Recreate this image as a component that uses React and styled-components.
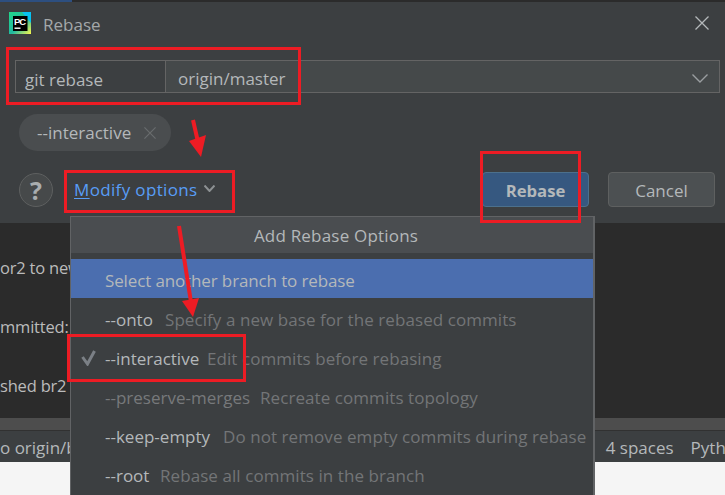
import React from "react";
import styled, { createGlobalStyle } from "styled-components";

const Global = createGlobalStyle`
  html, body { margin: 0; padding: 0; background: #f5f5f5; }
  body { font-family: "Open Sans", "Noto Sans", sans-serif; font-size: 17px; }
`;

const Page = styled.div`
  position: relative;
  width: 725px;
  height: 495px;
  overflow: hidden;
  display: flex;
  flex-direction: column;
  background: #f5f5f5;
`;

const TopStrip = styled.div`
  height: 2px;
  background: #2b2b2b;
  display: flex;
  div { width: 72px; background: #2d4f80; }
`;

const Dialog = styled.section`
  height: 221px;
  box-sizing: border-box;
  padding: 0 5px 0 9px;
  background: #3c3f41;
  color: #b4b8ba;
  display: flex;
  flex-direction: column;
`;

const TitleBar = styled.header`
  height: 46px;
  display: flex;
  align-items: center;
  gap: 12px;
  color: #a4a8aa;
  span { margin-bottom: 2px; }
  svg { margin-bottom: 4px; }
  svg:last-child { margin-left: auto; margin-right: 11px; }
`;

const Field = styled.div`
  margin: 12px 0 0 6px;
  height: 33px;
  display: flex;
  box-sizing: border-box;
  border: 1px solid #646464;
  line-height: 37px;
`;

const Prefix = styled.div`
  width: 150px;
  box-sizing: border-box;
  padding-left: 9px;
  border-right: 1px solid #646464;
`;

const BranchInput = styled.div`
  flex: 1;
  background: #45494a;
  padding: 3px 0 0 12px;
  display: flex;
  align-items: center;
  justify-content: space-between;
  svg { margin-right: 11px; }
`;

const Chip = styled.div`
  margin: 21px 0 0 10px;
  width: 152px;
  height: 37px;
  box-sizing: border-box;
  padding: 0 15px 0 18px;
  border-radius: 19px;
  background: #4a4d4f;
  display: flex;
  align-items: center;
  justify-content: space-between;
`;

const Footer = styled.footer`
  margin: 21px 5px 0 10px;
  display: flex;
  align-items: center;
  height: 35px;
`;

const HelpButton = styled.div`
  width: 34px;
  height: 34px;
  box-sizing: border-box;
  border-radius: 50%;
  border: 1px solid #5e6060;
  background: #46494a;
  font-weight: 700;
  font-size: 25px;
  line-height: 32px;
  text-align: center;
  color: #a9adaf;
`;

const ModifyLink = styled.div`
  margin-left: 21px;
  display: flex;
  align-items: center;
  gap: 6px;
  color: #589df6;
  letter-spacing: 0.35px;
  u { text-underline-offset: 2px; }
  svg { margin-bottom: 3px; }
`;

const Button = styled.div`
  width: ${(p) => p.$width}px;
  height: 35px;
  box-sizing: border-box;
  margin-left: ${(p) => p.$left || 0};
  border-radius: 4px;
  border: 1px solid ${(p) => (p.$primary ? "#4c708c" : "#5e6060")};
  background: ${(p) => (p.$primary ? "#365880" : "#4c5052")};
  font-size: ${(p) => (p.$primary ? "16.7px" : "17px")};
  font-weight: ${(p) => (p.$primary ? 700 : 400)};
  line-height: 35px;
  text-align: center;
  color: #b4b8ba;
`;

const Editor = styled.div`
  flex: 1;
  background: #2b2b2b;
  color: #bbbbbb;
  font-size: 16.5px;
  letter-spacing: -0.2px;
  overflow: hidden;
  display: flex;
  flex-direction: column;
  padding-top: 34px;
  gap: 37px;
`;

const OutputLine = styled.div`
  height: 22px;
  line-height: 22px;
  white-space: nowrap;
`;

const ScrollTrack = styled.div`
  height: 13px;
  box-sizing: border-box;
  background: #4d4d4d;
  border-bottom: 1px solid #323232;
`;

const StatusBar = styled.div`
  height: 31px;
  background: #3c3f41;
  color: #b4b8ba;
  line-height: 33px;
  display: flex;
  white-space: nowrap;
  overflow: hidden;
  box-shadow: 0 2px 3px rgba(0, 0, 0, 0.25);
`;

const StatusItem = styled.span`
  margin-left: ${(p) => p.$left}px;
`;

const Blank = styled.div`
  height: 33px;
  background: #f5f5f5;
`;

const Popup = styled.div`
  position: absolute;
  left: 70px;
  top: 216px;
  width: 525px;
  height: 285px;
  box-sizing: border-box;
  border: 1px solid #616365;
  border-right-width: 2px;
  background: #3c3f41;
`;

const PopupTitle = styled.div`
  height: 36px;
  box-sizing: border-box;
  padding-left: 8px;
  background: #4a4d50;
  color: #b4b8ba;
  line-height: 38px;
  text-align: center;
  letter-spacing: 0.2px;
  margin-bottom: 6px;
`;

const Option = styled.div`
  position: relative;
  height: 39px;
  box-sizing: border-box;
  padding-left: 34px;
  line-height: 43px;
  white-space: nowrap;
  display: flex;
  color: #b4b8ba;
  background: ${(p) => (p.$selected ? "#4b6eaf" : "transparent")};
  letter-spacing: ${(p) => (p.$selected ? "-0.13px" : "0")};
  svg { position: absolute; left: 10px; top: 13px; }
`;

const OptionName = styled.span`
  width: ${(p) => p.$width}px;
  flex: none;
  color: ${(p) => (p.$muted ? "#77797b" : "#b4b8ba")};
`;

const OptionHint = styled.span`
  color: #737577;
  letter-spacing: 0.07px;
`;

const RedBox = styled.div`
  position: absolute;
  left: ${(p) => p.$x}px;
  top: ${(p) => p.$y}px;
  width: ${(p) => p.$w}px;
  height: ${(p) => p.$h}px;
  box-sizing: border-box;
  border: 3px solid #ed1c24;
  pointer-events: none;
`;

const ArrowLayer = styled.svg`
  position: absolute;
  left: 0;
  top: 0;
  pointer-events: none;
`;

const OPTIONS = [
  { name: "--onto", width: 60, hint: "Specify a new base for the rebased commits" },
  { name: "--interactive", width: 102, hint: "Edit commits before rebasing", checked: true },
  { name: "--preserve-merges", width: 155, hint: "Recreate commits topology", muted: true },
  { name: "--keep-empty", width: 118, hint: "Do not remove empty commits during rebase" },
  { name: "--root", width: 55, hint: "Rebase all commits in the branch" },
];

const PyCharmIcon = () => (
  <svg width="22" height="22" viewBox="0 0 22 22">
    <defs>
      <linearGradient id="pc" x1="0" y1="0" x2="1" y2="1">
        <stop offset="0" stopColor="#21d789" />
        <stop offset="0.55" stopColor="#21b8a0" />
        <stop offset="1" stopColor="#fcf84a" />
      </linearGradient>
    </defs>
    <rect width="22" height="22" fill="url(#pc)" />
    <path d="M13 0h9v11z" fill="#07c3f2" />
    <rect x="4" y="4" width="14.5" height="15" fill="#000" />
    <text x="5" y="12.5" fontSize="9.5" fontWeight="700" fontFamily="Liberation Sans, sans-serif" fill="#fff" textLength="12">PC</text>
    <rect x="5.5" y="15.5" width="6" height="1.4" fill="#fff" />
  </svg>
);

const Chevron = ({ w = 16, h = 8, color = "#9a9ea0", width = 1.4 }) => (
  <svg width={w} height={h + 1} viewBox={`0 0 ${w} ${h + 1}`}>
    <path d={`M.5 .5L${w / 2} ${h}L${w - 0.5} .5`} fill="none" stroke={color} strokeWidth={width} />
  </svg>
);

const Cross = ({ size, color, width }) => (
  <svg width={size} height={size} viewBox="0 0 14 14">
    <path d="M.5 .5L13.5 13.5M13.5 .5L.5 13.5" stroke={color} strokeWidth={width} fill="none" />
  </svg>
);

export default function App() {
  return (
    <Page>
      <Global />
      <TopStrip><div /></TopStrip>
      <Dialog>
        <TitleBar>
          <PyCharmIcon />
          <span>Rebase</span>
          <Cross size={14} color="#b4b8ba" width={1.3} />
        </TitleBar>
        <Field>
          <Prefix>git rebase</Prefix>
          <BranchInput>
            origin/master
            <Chevron />
          </BranchInput>
        </Field>
        <Chip>
          --interactive
          <Cross size={12} color="#696c6e" width={1.4} />
        </Chip>
        <Footer>
          <HelpButton>?</HelpButton>
          <ModifyLink>
            <span><u>M</u>odify options</span>
            <Chevron w={11} h={6} color="#8d9193" width={2} />
          </ModifyLink>
          <Button $primary $width={107} $left="auto">Rebase</Button>
          <Button $width={107} $left="19px">Cancel</Button>
        </Footer>
      </Dialog>
      <Editor>
        <OutputLine>or2 to new</OutputLine>
        <OutputLine>mmitted:</OutputLine>
        <OutputLine>shed br2</OutputLine>
      </Editor>
      <ScrollTrack />
      <StatusBar>
        <StatusItem $left={0}>o origin/b</StatusItem>
        <StatusItem $left={529}>4 spaces</StatusItem>
        <StatusItem $left={17}>Pyth</StatusItem>
      </StatusBar>
      <Blank />
      <Popup>
        <PopupTitle>Add Rebase Options</PopupTitle>
        <Option $selected>Select another branch to rebase</Option>
        {OPTIONS.map((o) => (
          <Option key={o.name}>
            {o.checked && (
              <svg width="15" height="16" viewBox="0 0 15 16">
                <path d="M1.5 7L6.5 14L13.5 1" fill="none" stroke="#7b8086" strokeWidth="3" />
              </svg>
            )}
            <OptionName $muted={o.muted} $width={o.width}>{o.name}</OptionName>
            <OptionHint>{o.hint}</OptionHint>
          </Option>
        ))}
      </Popup>
      <RedBox $x={6} $y={47} $w={295} $h={58} />
      <RedBox $x={64} $y={170} $w={171} $h={43} />
      <RedBox $x={480} $y={151} $w={101} $h={72} />
      <RedBox $x={67} $y={334} $w={179} $h={48} />
      <ArrowLayer width="725" height="495" viewBox="0 0 725 495">
        <path d="M193 120L198 142" stroke="#ed1c24" strokeWidth="4" fill="none" />
        <path d="M189 141L206 135L201 157z" fill="#ed1c24" />
        <path d="M179 226L191 302" stroke="#ed1c24" strokeWidth="4" fill="none" />
        <path d="M182 301L199 298L193 317z" fill="#ed1c24" />
      </ArrowLayer>
    </Page>
  );
}
